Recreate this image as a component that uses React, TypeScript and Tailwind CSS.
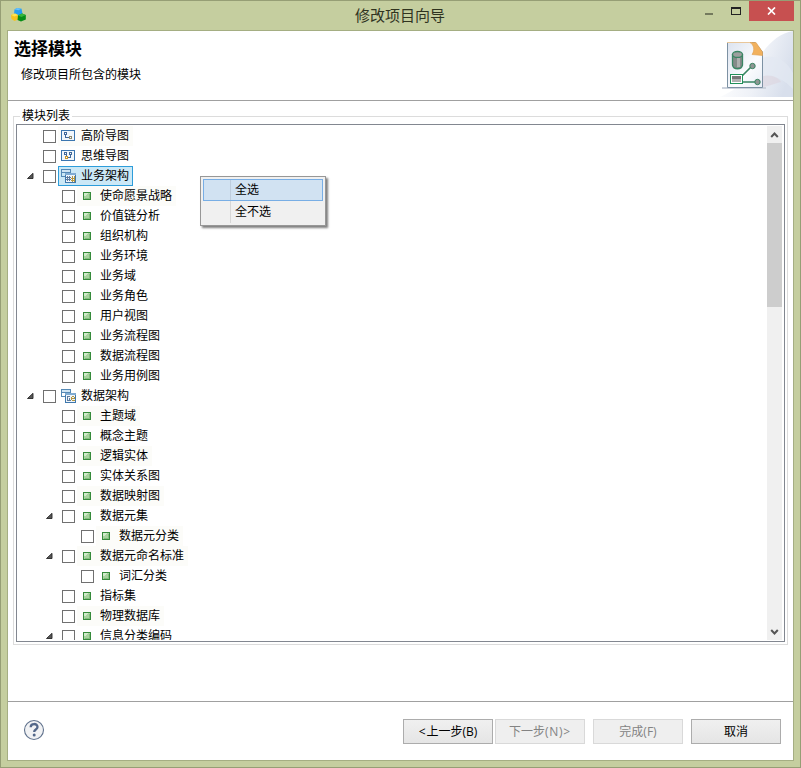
import React from "react";

type Kind = "map" | "mind" | "group" | "data" | "leaf";
type Item = { text: string; level: 0 | 1 | 2; kind: Kind; open?: boolean; tint?: boolean; selected?: boolean };

const items: Item[] = [
  { text: "高阶导图", level: 0, kind: "map", tint: true },
  { text: "思维导图", level: 0, kind: "mind" },
  { text: "业务架构", level: 0, kind: "group", open: true, selected: true },
  { text: "使命愿景战略", level: 1, kind: "leaf", tint: true },
  { text: "价值链分析", level: 1, kind: "leaf" },
  { text: "组织机构", level: 1, kind: "leaf" },
  { text: "业务环境", level: 1, kind: "leaf" },
  { text: "业务域", level: 1, kind: "leaf" },
  { text: "业务角色", level: 1, kind: "leaf" },
  { text: "用户视图", level: 1, kind: "leaf" },
  { text: "业务流程图", level: 1, kind: "leaf" },
  { text: "数据流程图", level: 1, kind: "leaf" },
  { text: "业务用例图", level: 1, kind: "leaf" },
  { text: "数据架构", level: 0, kind: "data", open: true },
  { text: "主题域", level: 1, kind: "leaf", tint: true },
  { text: "概念主题", level: 1, kind: "leaf" },
  { text: "逻辑实体", level: 1, kind: "leaf", tint: true },
  { text: "实体关系图", level: 1, kind: "leaf" },
  { text: "数据映射图", level: 1, kind: "leaf", tint: true },
  { text: "数据元集", level: 1, kind: "leaf", open: true },
  { text: "数据元分类", level: 2, kind: "leaf", tint: true },
  { text: "数据元命名标准", level: 1, kind: "leaf", open: true, tint: true },
  { text: "词汇分类", level: 2, kind: "leaf" },
  { text: "指标集", level: 1, kind: "leaf" },
  { text: "物理数据库", level: 1, kind: "leaf", tint: true },
  { text: "信息分类编码", level: 1, kind: "leaf", open: true },
];

const indent = ["pl-[8px]", "pl-[27px]", "pl-[46px]"];

function NodeIcon({ kind }: { kind: Kind }) {
  if (kind === "leaf")
    return (
      <svg width="16" height="16" viewBox="0 0 16 16" shapeRendering="crispEdges">
        <rect x="4.5" y="4.5" width="7" height="7" fill="#a9d3a0" stroke="#368a3b" />
        <path d="M5 8V5h4v1H8v1H7v1z" fill="#d3ebcc" />
        <path d="M11 6v5H6v-1h4V6z" fill="#85bd7e" />
      </svg>
    );
  if (kind === "map")
    return (
      <svg width="16" height="16" viewBox="0 0 16 16" shapeRendering="crispEdges">
        <rect x="1.5" y="2.5" width="13" height="10" fill="#f1f7fc" stroke="#3b76b0" />
        <path d="M4 4h3v3H4zM5 7h1v3H5zM6 9h3v1H6z" fill="#41699b" />
        <path d="M9 8h3v3H9z" fill="#8c8a70" />
        <path d="M5 5h1v1H5zM10 9h1v1h-1z" fill="#fff" />
      </svg>
    );
  if (kind === "mind")
    return (
      <svg width="16" height="16" viewBox="0 0 16 16" shapeRendering="crispEdges">
        <rect x="1.5" y="2.5" width="13" height="10" fill="#f1f7fc" stroke="#3b76b0" />
        <path d="M4 4h3v3H4zM9 4h3v3H9zM6 7h1v1H6zM10 7h1v3H8V9h2z" fill="#41699b" />
        <path d="M5 8h3v3H5z" fill="#c9962c" />
        <path d="M5 5h1v1H5zM10 5h1v1h-1zM6 9h1v1H6z" fill="#fff" />
      </svg>
    );
  return (
    <svg width="16" height="16" viewBox="0 0 16 16" shapeRendering="crispEdges">
      <rect x="1.5" y="1.5" width="9" height="3" fill="#cfe4f3" stroke="#5589b5" />
      <path d="M1.500 4.500v4h3" fill="none" stroke="#5589b5" />
      <rect x="5.500" y="5.500" width="10" height="9" fill="#eef5fb" stroke="#3f78ad" />
      <path d="M5 5h11v2H5z" fill="#7fabd2" />
      {kind === "group" ? (
        <>
          <path d="M7 8h1v5H7zM9 8h1v5H9zM6 9h5v1H6zM6 11h5v1H6z" fill="#5f7c9f" />
          <path d="M12 8h1v6h-1zM14 8h1v6h-1zM11 10h4v1h-4zM11 12h4v1h-4z" fill="#b6963e" />
        </>
      ) : (
        <>
          <path d="M7 8h3v1H7zM7 9h1v4H7zM8 12h3v1H8zM9 10h1v2H9z" fill="#5f7c9f" />
          <path d="M12 8h2v1h-2zM11 9h1v3h-1zM12 12h3v1h-3zM14 9h1v2h-1zM12 10h2v1h-2z" fill="#b6963e" />
        </>
      )}
    </svg>
  );
}

function TreeRow({ item }: { item: Item }) {
  const box = item.selected
    ? "border-[#2d9dda] bg-[#cbe8f6]"
    : item.tint
      ? "border-transparent bg-[#fcfcf9]"
      : "border-transparent";
  return (
    <div className={`flex h-5 shrink-0 items-start ${indent[item.level]}`}>
      <div className="h-5 w-[17px] shrink-0">
        {item.open && (
          <svg width="8" height="8" viewBox="0 0 8 8" className="mt-[6px]">
            <path d="M7 1.300v5.200H1.500z" fill="#595959" stroke="#262626" strokeWidth=".9" />
          </svg>
        )}
      </div>
      <div className="mt-1 size-[13px] shrink-0 border border-[#707070] bg-white" />
      <div className={`ml-[2px] flex h-5 items-center border pr-[3px] pl-[1px] ${box}`}>
        <NodeIcon kind={item.kind} />
        <span className="ml-[5px] leading-[18px] whitespace-nowrap">{item.text}</span>
      </div>
    </div>
  );
}

function BannerArt() {
  return (
    <svg width="75" height="66" viewBox="0 0 75 66">
      <defs>
        <linearGradient id="sweep" x1="0" y1="0.2" x2="1" y2="0.5">
          <stop offset="0.1" stopColor="#fff" />
          <stop offset="0.6" stopColor="#eef1f7" />
          <stop offset="1" stopColor="#d8dfec" />
        </linearGradient>
        <linearGradient id="sheet" x1="0" y1="0" x2="1" y2="1">
          <stop offset="0" stopColor="#dce3ef" />
          <stop offset="0.6" stopColor="#fbfcfe" />
          <stop offset="1" stopColor="#e9eef6" />
        </linearGradient>
      </defs>
      <path d="M2 66C20 58 35 47 43 24C52 10 63 2 75 0v66z" fill="url(#sweep)" />
      <path d="M44 27c15-5 26 5 31 15v16C64 46 54 44 44 48z" fill="#e3e8f2" opacity=".7" />
      <path d="M43 46c9-4 18 1 20 5-6 1-13 5-20 5z" fill="#dcd3dd" opacity=".6" />
      <path d="M4 57h44" stroke="#ccd2dc" strokeWidth="2" />
      <path d="M9.500 11.500H37L44.500 21v35.500h-35z" fill="url(#sheet)" stroke="#7d91a3" />
      <path d="M9 11.500h25" stroke="#e9c79a" />
      <path d="M32 11.500h6l6.500 9.500v3.500L34 23.500C37 19 36 14 32 11.500z" fill="#f2b15d" stroke="#dda052" strokeWidth=".6" />
      <path d="M14.500 23v11c1 5 9 5 10 0V23" fill="#858b89" stroke="#398563" strokeWidth="1.300" />
      <ellipse cx="19.500" cy="23.500" rx="5" ry="3" fill="#9c9f9e" stroke="#398563" strokeWidth="1.300" />
      <path d="M19 27h3v9h-3z" fill="#adb0af" />
      <path d="M24 45l9-9M25 51h14" stroke="#398563" strokeWidth="1.600" />
      <circle cx="34.500" cy="35" r="2.700" fill="#8e9693" stroke="#398563" />
      <circle cx="39.500" cy="51" r="2.700" fill="#8e9693" stroke="#398563" />
      <rect x="12.500" y="43.500" width="12" height="9" fill="#fff" stroke="#21905a" />
      <path d="M14 45h9v3h-9z" fill="#777" />
      <path d="M14 48h9v3h-9z" fill="#b1b1b1" />
    </svg>
  );
}

function DialogButton({ children, disabled = false, className = "" }: { children: React.ReactNode; disabled?: boolean; className?: string }) {
  return (
    <button
      disabled={disabled}
      className={`flex h-[25px] w-[90px] items-center justify-center border leading-none ${
        disabled ? "border-[#d9d9d9] bg-[#efefef] text-[#838383]" : "border-[#acacac] bg-linear-to-b from-[#f0f0f0] to-[#e5e5e5] text-black"
      } ${className}`}
    >
      {children}
    </button>
  );
}

export default function App() {
  return (
    <div className="relative flex h-[768px] w-[801px] flex-col overflow-hidden border border-[#969e75] bg-[#c5ce9f] px-1.5 pb-1.5 font-['Open_Sans','Noto_Sans_CJK_SC',sans-serif] text-[12px] text-black">
      <header className="flex h-[29px] shrink-0 items-start">
        <svg width="17" height="16" viewBox="0 0 17 16" className="mt-[6px] ml-[3px]">
          <path d="M4.500 2.500L7 1l4.500.7 1 5L8.500 9 4 7z" fill="#249df0" />
          <path d="M4.500 2.500L7 1l4.500.7-3 1.600z" fill="#65c1ff" />
          <path d="M1 8l4-1.500L8 8v4.500L4.500 14 1.500 12z" fill="#f4c321" />
          <path d="M1 8l4-1.500L8 8l-3.500 1.500z" fill="#ffe34f" />
          <path d="M8 8.500L12 6.500l3.800 1.500v4.500L11 14.500 7.500 13z" fill="#078e17" />
          <path d="M8 8.500L12 6.500l3.800 1.500-4.300 2z" fill="#38b63c" />
        </svg>
        <h1 className="ml-[22px] flex-1 pt-[4px] pl-[46px] text-center text-[15px] leading-[20px] text-[#30331f]">修改项目向导</h1>
        <div className="flex h-5 items-start">
          <div className="mt-3 h-[2px] w-2 bg-[#747a5d]" />
          <div className="mt-[6px] ml-[18px] h-2 w-[10px] border border-t-2 border-[#222]" />
          <div className="ml-2 flex h-5 w-[45px] items-center justify-center bg-[#c75050]">
            <svg width="9" height="8" viewBox="0 0 9 8"><path d="M1 .5l7 7M8 .5l-7 7" stroke="white" strokeWidth="1.700" /></svg>
          </div>
        </div>
      </header>
      <main className="flex min-h-0 flex-1 flex-col border border-[#a5ae83] bg-white">
        <section className="flex h-[70px] shrink-0 justify-between border-b border-[#a0a0a0]">
          <div className="pl-[6px]">
            <h2 className="pt-[6px] text-[17px] leading-6 font-bold">选择模块</h2>
            <p className="pt-[5px] pl-[7px] leading-[18px]">修改项目所包含的模块</p>
          </div>
          <BannerArt />
        </section>
        <fieldset className="mx-[5px] mt-[7px] flex h-[537px] min-w-0 shrink-0 flex-col border border-[#dcdcdc] px-[2px] pb-[2px]">
          <legend className="ml-[4px] h-[16px] px-[2px] leading-[16px]">模块列表</legend>
          <div className="flex h-[518px] border border-[#828790] py-px pr-[2px] pl-px">
            <div className="flex min-w-0 flex-1 flex-col overflow-hidden">
              {items.map((item) => <TreeRow key={item.text} item={item} />)}
            </div>
            <div className="flex w-[15px] shrink-0 flex-col items-center bg-[#f0f0f0]">
              <svg width="15" height="17" viewBox="0 0 15 17"><path d="M4.200 11l3.300-3.500L10.800 11" fill="none" stroke="#555" strokeWidth="2" /></svg>
              <div className="h-[164px] w-full bg-[#cdcdcd]" />
              <svg className="mt-auto" width="15" height="17" viewBox="0 0 15 17"><path d="M4.200 7l3.300 3.500L10.800 7" fill="none" stroke="#555" strokeWidth="2" /></svg>
            </div>
          </div>
        </fieldset>
        <footer className="mt-auto flex h-[59px] shrink-0 items-start border-t border-[#a0a0a0] pr-3 pl-[15px]">
          <svg width="22" height="22" viewBox="0 0 22 22" className="mt-[17px] mr-auto">
            <circle cx="11" cy="11" r="9.500" fill="#f1f2f4" stroke="#60728d" strokeWidth="1.100" />
            <path d="M7.700 8.200C7.700 4 14.500 4 14.500 8c0 2.700-3.300 2.400-3.300 5" fill="none" stroke="#536789" strokeWidth="2.300" />
            <circle cx="11.200" cy="16" r="1.500" fill="#536789" />
          </svg>
          <div className="flex pt-[17px]">
            <DialogButton><span className="mr-px">&lt;</span>上一步(B)</DialogButton>
            <DialogButton className="ml-[2px]" disabled>下一步<span className="tracking-[0.7px]">(N)&gt;</span></DialogButton>
            <DialogButton className="ml-2" disabled>完成(F)</DialogButton>
            <DialogButton className="ml-2">取消</DialogButton>
          </div>
        </footer>
      </main>
      <div role="menu" className="absolute top-[175px] left-[199px] h-[50px] w-[126px] border border-[#979797] bg-[#f0f0f0] p-[2px] shadow-[2px_2px_2px_rgba(0,0,0,0.5)]">
        <div role="menuitem" className="flex h-[22px] border border-[#78aee5] bg-[#d1e2f2]">
          <div className="w-[27px] border-r border-[#becddd]" />
          <span className="pl-[4px] leading-[20px]">全选</span>
        </div>
        <div role="menuitem" className="flex h-[22px] px-px">
          <div className="w-[27px] border-r border-[#d7d7d7]" />
          <span className="pl-[4px] leading-[22px]">全不选</span>
        </div>
      </div>
    </div>
  );
}
